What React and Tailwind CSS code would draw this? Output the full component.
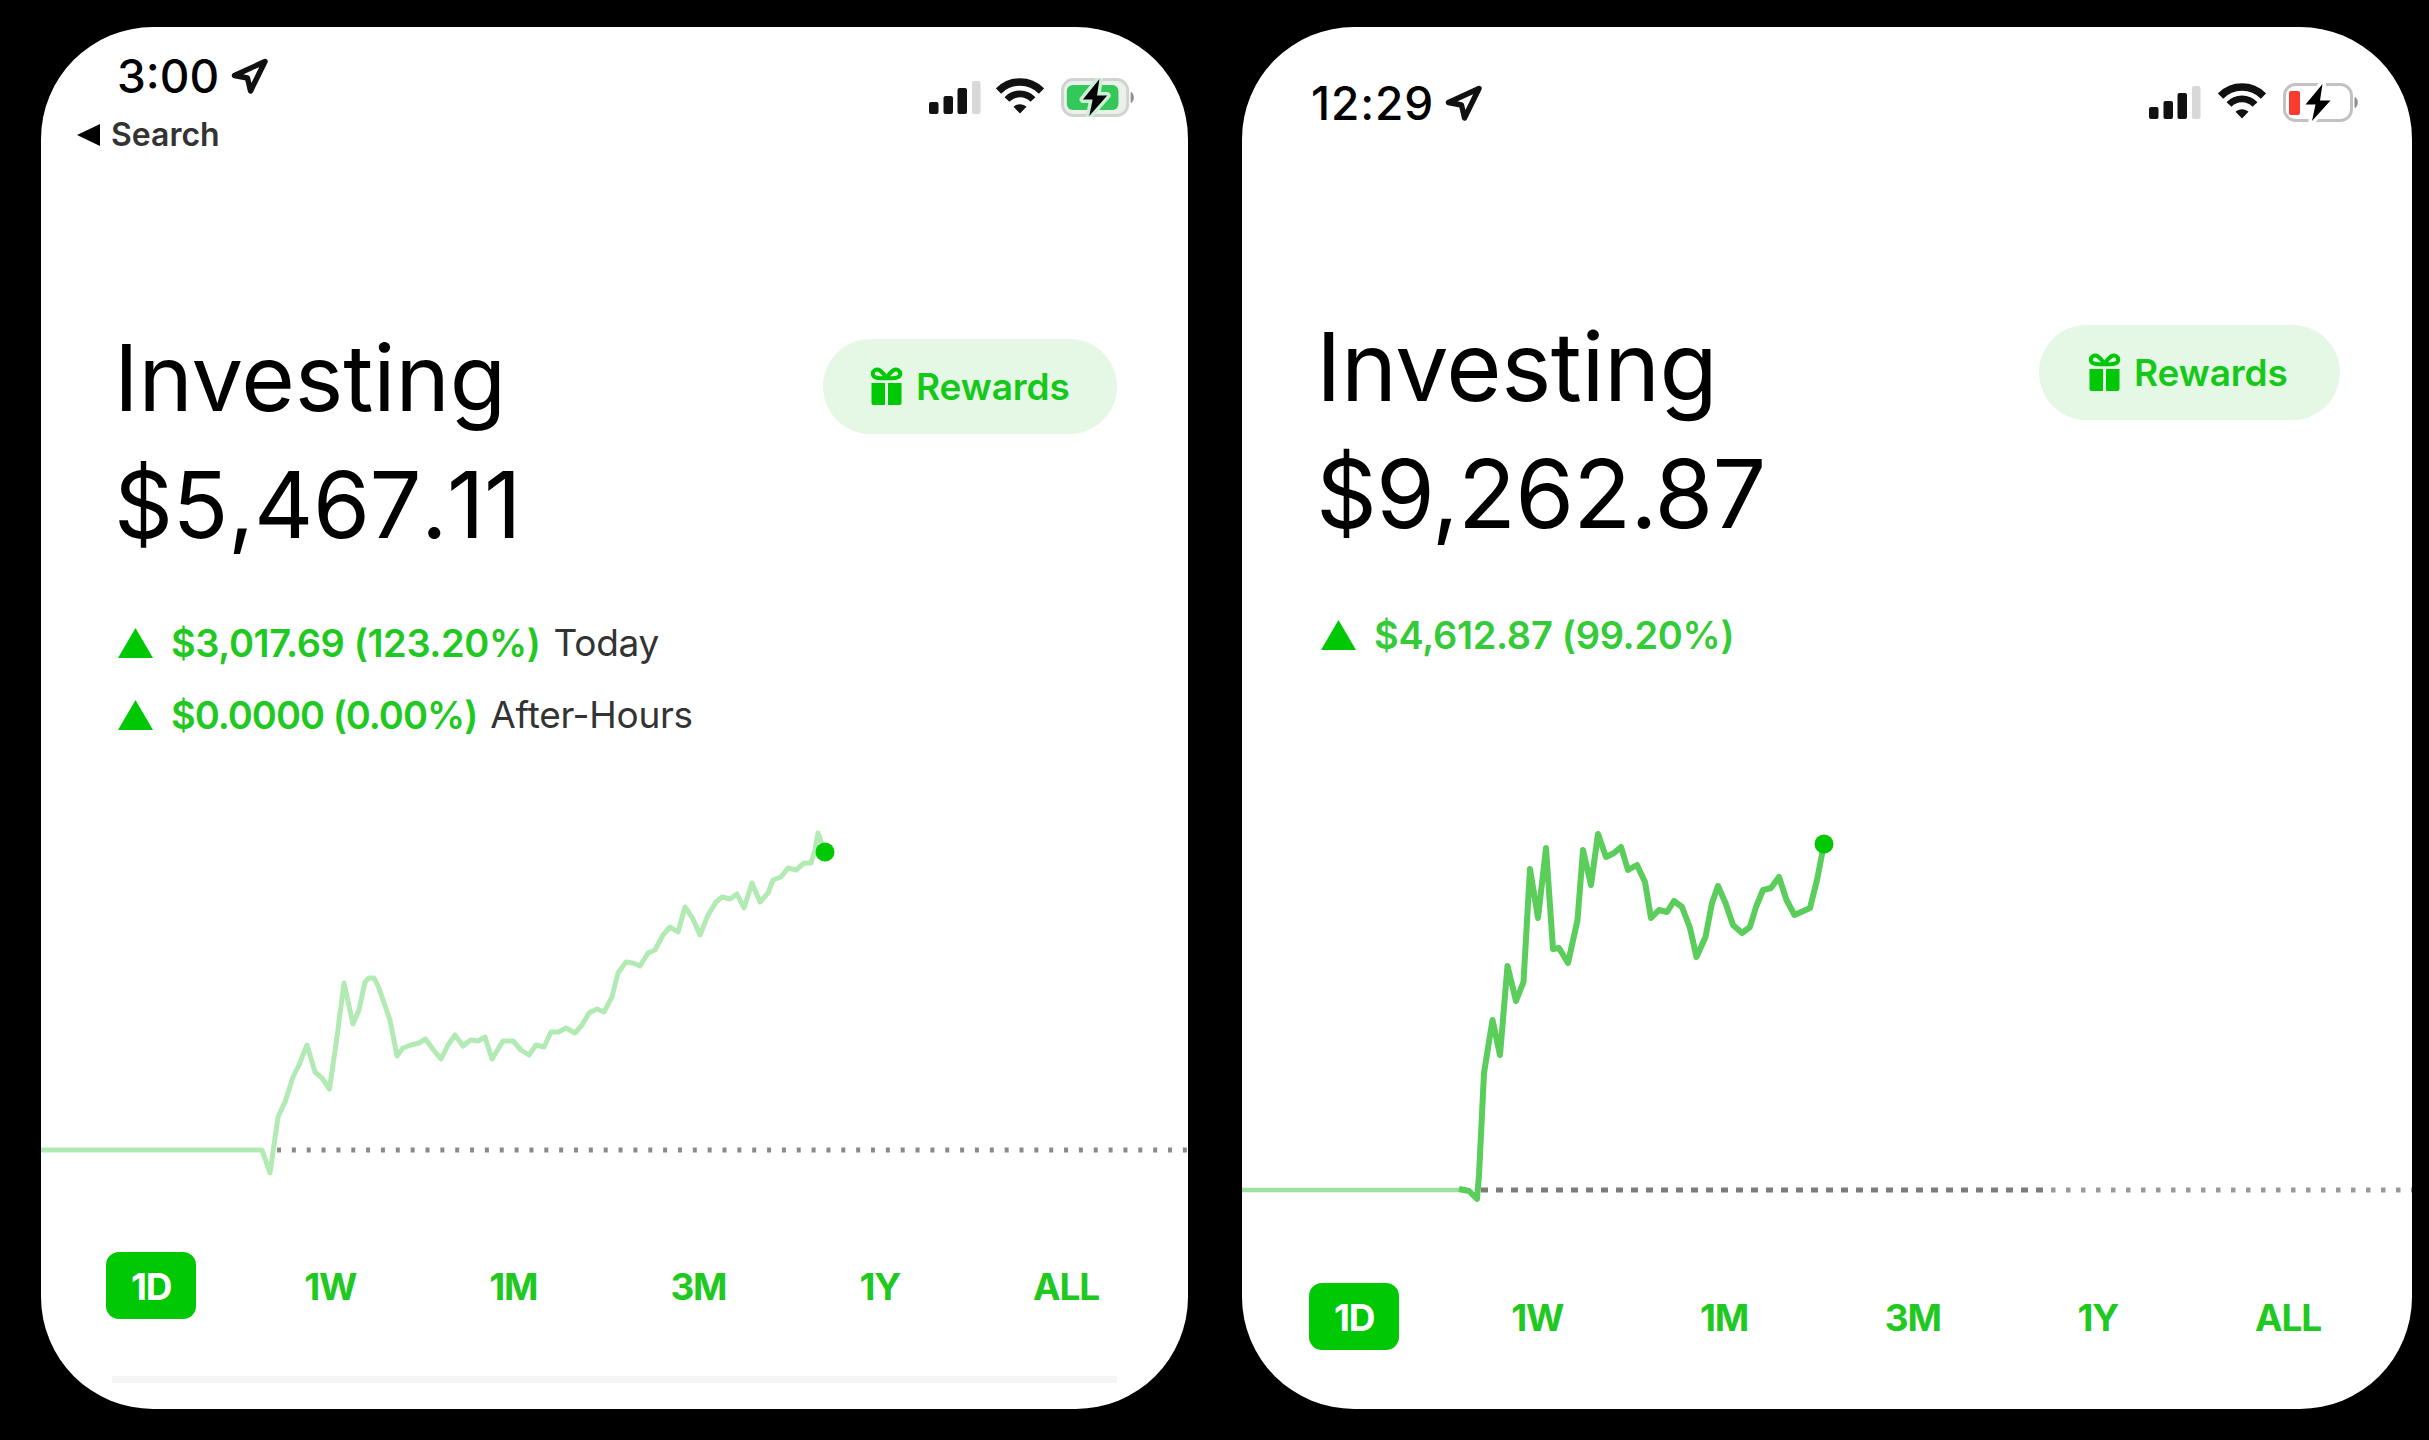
import React, { useState } from 'react';

const RANGES = ['1D', '1W', '1M', '3M', '1Y', 'ALL'];

const LEFT_POINTS =
  '0,330 221,330 229,353 237,297 244,282 252,257 258,245 266,225 274,252 281,258 288.5,269 296,217 303,163 312,204 318,190 324,162 328,158 333,158 337.5,167 349,200 356,236 362,228 370,225 378,223 384.5,219 392.5,230 400,239 407,225 414,215 422,226 429.5,220 437,221 444,217 451,239 462,221 472,221 480,230 488,235 495,225 503,227 510,212 517.5,212 525,208 534,213 541,205 548,193 556,189 563,192 571,177 577,153 585,142 592,143 599,146 607,133 614,130 622,115 629,107 637,112 644,87 651.5,98 659,115 667,95 675,82 681,77 689,79 696,74 703,88 711,63 719,82 727,73 732,60 740,57 747,48 755,50 763,43 770,43 774,30 777,13 784,32';

const RIGHT_POINTS =
  '217,369 227,371 235,379 237,355 242,253 250.5,200 258,235 265.5,146 274,181 281.5,162 288,49 296,98 304,28 311,129 317,128 326,143 335.5,100 341,30 349,65 356,14 364,37 372,33 379,27 386,50 395,45 403,62 409,98 417,90 425,92 432,81 440,87 448,108 454.5,137 463.5,117 470,83 476,66 483.5,83 491,105 500,113 508,107 514,87 521,70 529,68 537,57 544.5,80 552.5,95 568,88 575,60 582,24';

/* ===================== Iconos ===================== */

const LocationArrow = () => (
  <svg className="h-[37px] w-[39px]" viewBox="0 0 39 37" fill="none">
    <path d="M35 3.500L4.500 17.500L17.500 20L20.500 33Z" stroke="#111" strokeWidth="5.4" strokeLinejoin="round" />
  </svg>
);

const Signal = () => (
  <svg className="h-[33px] w-[52px]" viewBox="0 0 52 33">
    <rect x="0" y="21" width="9.5" height="12" rx="2" fill="#111" />
    <rect x="14.5" y="15" width="9.5" height="18" rx="2" fill="#111" />
    <rect x="28.5" y="7" width="9.5" height="26" rx="2" fill="#111" />
    <rect x="43" y="0" width="8.5" height="33" rx="2" fill="#d8d8d8" />
  </svg>
);

const Wifi = () => (
  <svg className="h-[36px] w-[48px]" viewBox="0 0 48 36" fill="none" stroke="#111">
    <path d="M2.5 13C14.5 1 33.5 1 45.5 13" strokeWidth="7.5" />
    <path d="M11 21.5C18 14 30 14 37 21.5" strokeWidth="6.8" />
    <path d="M24 35.5L17.5 28.8C21 25.4 27 25.4 30.5 28.8Z" fill="#111" stroke="none" />
  </svg>
);

const Battery = ({ low }) => (
  <svg className={low ? 'h-[39px] w-[76px]' : 'h-[39px] w-[74px]'} viewBox="0 0 76 39" preserveAspectRatio="none">
    <rect x="1.5" y="1.5" width="67" height="36" rx="11" fill={low ? '#fff' : '#eaf0ea'} stroke={low ? '#c2c2c2' : '#d0d4d0'} strokeWidth="3" />
    <path d="M72 14.5C75 16 75 23 72 24.5Z" fill="#8d8d8d" stroke="#8d8d8d" />
    {low ? (
      <rect x="6" y="8" width="11" height="24" rx="2" fill="#fb3b30" />
    ) : (
      <rect x="6" y="7" width="53" height="25" rx="6" fill="#34c759" />
    )}
    <path
      d="M39.5 1L22.500 21.5H32.500L29 38L47.500 17.5H37Z"
      fill="#000"
      stroke={low ? '#fff' : '#cdeed5'}
      strokeWidth="7"
      strokeLinejoin="round"
      paintOrder="stroke"
    />
  </svg>
);

const Gift = () => (
  <svg className="h-[39px] w-[33px]" viewBox="0 0 33 39" fill="#00c805">
    <path d="M1.500 16H15V38H3.500Q1.500 38 1.500 36ZM18 16H31.500V36Q31.500 38 29.500 38H18Z" />
    <path
      d="M16.5 11C12 11.5 4 11.5 3 8C2 3.5 6.5 1 10 3.5C13 5.5 15 8.5 16.5 11ZM16.5 11C21 11.5 29 11.5 30 8C31 3.5 26.5 1 23 3.5C20 5.5 18 8.5 16.5 11Z"
      fill="none"
      stroke="#00c805"
      strokeWidth="4"
    />
  </svg>
);

const Triangle = () => (
  <svg className="h-[30px] w-[35px]" viewBox="0 0 35 30">
    <path d="M17.5 0L35 30H0Z" fill="#00c805" />
  </svg>
);

/* ===================== Subcomponentes ===================== */

const StatusIcons = ({ low, className }) => (
  <div className={`flex items-end ${className}`}>
    <div className="mb-[3px]"><Signal /></div>
    <div className={`mb-[3px] ${low ? 'ml-[17px]' : 'ml-[15px]'}`}><Wifi /></div>
    <div className="ml-[17px]"><Battery low={low} /></div>
  </div>
);

const RewardsButton = ({ className }) => (
  <button className={`flex h-[95px] items-center rounded-full bg-[#e5f7e5] text-[37px] font-semibold text-[#16c81a] ${className}`}>
    <Gift />
    <span className="ml-[13px] tracking-[-0.1px]">Rewards</span>
  </button>
);

const Gain = ({ amount, label, tone }) => (
  <div className="flex h-[72px] items-center leading-[72px]">
    <Triangle />
    <span className={`ml-[18px] text-[38px] font-semibold ${tone}`}>{amount}</span>
    {label && <span className="ml-[13px] text-[37px] tracking-[-0.3px] text-[#333]">{label}</span>}
  </div>
);

const RangeTabs = ({ className }) => {
  const [range, setRange] = useState('1D');
  return (
    <div className={`flex justify-between ${className}`}>
      {RANGES.map((r) => (
        <button
          key={r}
          onClick={() => setRange(r)}
          className={`h-[67px] rounded-[13px] px-[25px] pt-[2px] text-[37px] font-bold tracking-[-1.2px] ${
            range === r ? 'bg-[#00c805] text-white' : 'text-[#1fc922]'
          }`}
        >
          {r}
        </button>
      ))}
    </div>
  );
};

/* ===================== Vista ===================== */

const App = () => {
  return (
    <div className="flex h-[1440px] w-[2429px] bg-black pl-[41px] pt-[27px] font-['Inter',sans-serif] text-black">
      <section className="h-[1382px] w-[1147px] overflow-hidden rounded-[112px] bg-white">
        <header className="flex h-[287px] items-start justify-between pl-[36px] pr-[53px] pt-[21px]">
          <div>
            <div className="flex items-center pl-[40px] text-[46px] font-medium leading-[56px]">
              3:00
              <span className="ml-[11px]"><LocationArrow /></span>
            </div>
            <div className="mt-[11px] flex items-center text-[32px] font-semibold leading-[40px] text-[#333]">
              <svg className="mr-[11px] h-[22px] w-[23px]" viewBox="0 0 23 22">
                <path d="M0 11L23 0V22Z" fill="#000" />
              </svg>
              Search
            </div>
          </div>
          <StatusIcons className="mt-[30px]" />
        </header>

        <div className="flex items-start justify-between pl-[73px] pr-[71px]">
          <div className="text-[92px] leading-[127px]">
            <h1 className="tracking-[-0.1px]">Investing</h1>
            <p className="tracking-[-0.5px] [font-kerning:none]">$5,467.11</p>
          </div>
          <RewardsButton className="mt-[25px] w-[294px] pl-[47px]" />
        </div>

        <div className="mt-[39px] pl-[77px]">
          <Gain amount="$3,017.69 (123.20%)" label="Today" tone="text-[#1fc922] tracking-[-0.4px]" />
          <Gain amount="$0.0000 (0.00%)" label="After-Hours" tone="text-[#1fc922] tracking-[-1px]" />
        </div>

        <svg className="mt-[69px] h-[360px] w-[1147px]" viewBox="0 0 1147 360" fill="none">
          <path d="M236 330H1147" stroke="#8a8a8a" strokeWidth="5" strokeDasharray="4 10.85" />
          <polyline points={LEFT_POINTS} stroke="#b2eab3" strokeWidth="5" strokeLinejoin="round" />
          <circle cx="784" cy="32" r="9.5" fill="#00c805" />
        </svg>

        <RangeTabs className="ml-[65px] mr-[64px] mt-[72px]" />
        <div className="ml-[71px] mr-[71px] mt-[57px] h-[7px] bg-[#f5f5f5]" />
      </section>

      <section className="ml-[54px] h-[1382px] w-[1170px] overflow-hidden rounded-[112px] bg-white">
        <header className="flex h-[276px] items-start justify-between pl-[69px] pr-[53px] pt-[48px]">
          <div className="flex items-center text-[46px] font-medium leading-[56px]">
            <span className="tracking-[0.9px]">12:29</span>
            <span className="ml-[10px]"><LocationArrow /></span>
          </div>
          <StatusIcons low className="mt-[8px]" />
        </header>

        <div className="flex items-start justify-between pl-[74px] pr-[72px]">
          <div className="text-[95px] leading-[127px]">
            <h1 className="tracking-[-0.5px]">Investing</h1>
            <p className="tracking-[-0.9px]">$9,262.87</p>
          </div>
          <RewardsButton className="mt-[22px] w-[301px] pl-[49px]" />
        </div>

        <div className="mt-[42px] pl-[79px]">
          <Gain amount="$4,612.87 (99.20%)" tone="text-[#35cb38] tracking-[-0.3px]" />
        </div>

        <svg className="mt-[149px] h-[390px] w-[1170px]" viewBox="0 0 1170 390" fill="none">
          <path d="M239 370H808" stroke="#7c7c7c" strokeWidth="5" strokeDasharray="7 8" />
          <path d="M809 370H1170" stroke="#999" strokeWidth="5" strokeDasharray="4.5 10.5" />
          <path d="M0 370H220" stroke="#9fe0a0" strokeWidth="4.5" />
          <polyline points={RIGHT_POINTS} stroke="#5acd5b" strokeWidth="6" strokeLinejoin="round" />
          <circle cx="582" cy="24" r="9.5" fill="#00c805" />
        </svg>

        <RangeTabs className="ml-[67px] mr-[66px] mt-[73px]" />
      </section>
    </div>
  );
};

export default App;
